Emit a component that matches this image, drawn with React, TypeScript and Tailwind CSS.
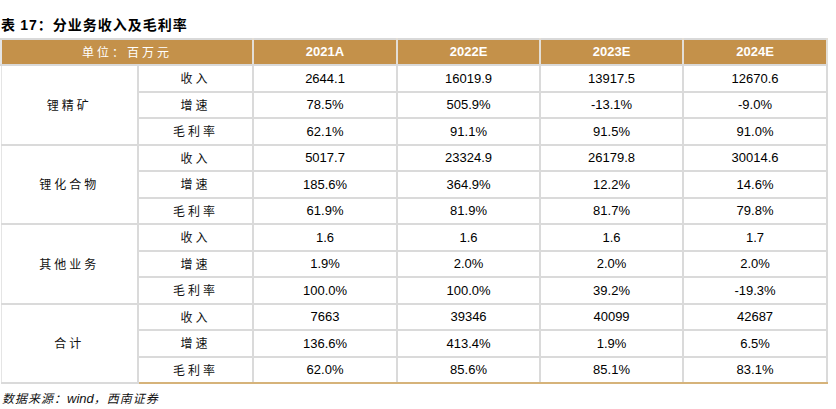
import React from "react";

type Group = {
  name: string;
  rows: { label: string; values: string[] }[];
};

const groups: Group[] = [
  {
    name: "锂精矿",
    rows: [
      { label: "收入", values: ["2644.1", "16019.9", "13917.5", "12670.6"] },
      { label: "增速", values: ["78.5%", "505.9%", "-13.1%", "-9.0%"] },
      { label: "毛利率", values: ["62.1%", "91.1%", "91.5%", "91.0%"] },
    ],
  },
  {
    name: "锂化合物",
    rows: [
      { label: "收入", values: ["5017.7", "23324.9", "26179.8", "30014.6"] },
      { label: "增速", values: ["185.6%", "364.9%", "12.2%", "14.6%"] },
      { label: "毛利率", values: ["61.9%", "81.9%", "81.7%", "79.8%"] },
    ],
  },
  {
    name: "其他业务",
    rows: [
      { label: "收入", values: ["1.6", "1.6", "1.6", "1.7"] },
      { label: "增速", values: ["1.9%", "2.0%", "2.0%", "2.0%"] },
      { label: "毛利率", values: ["100.0%", "100.0%", "39.2%", "-19.3%"] },
    ],
  },
  {
    name: "合计",
    rows: [
      { label: "收入", values: ["7663", "39346", "40099", "42687"] },
      { label: "增速", values: ["136.6%", "413.4%", "1.9%", "6.5%"] },
      { label: "毛利率", values: ["62.0%", "85.6%", "85.1%", "83.1%"] },
    ],
  },
];

const years = ["2021A", "2022E", "2023E", "2024E"];

const cjk = "font-['Noto_Sans_CJK_SC',sans-serif]";
const num = "font-['Liberation_Sans',Arial,sans-serif]";

export default function App() {
  return (
    <div className="w-[836px] h-[409px] bg-white text-black overflow-hidden">
      {/* TITLE */}
      <div
        className={`h-[38px] pt-[15px] pl-[1px] text-[14px] leading-[18px] font-bold tracking-[1px] ${cjk}`}
      >
        表 <span className={num}>17</span>：分业务收入及毛利率
      </div>

      {/* TABLE */}
      <table className="table-fixed border-collapse w-[826px]">
        <colgroup>
          <col className="w-[137px]" />
          <col className="w-[115px]" />
          <col className="w-[144px]" />
          <col className="w-[143px]" />
          <col className="w-[143px]" />
          <col className="w-[144px]" />
        </colgroup>
        <thead>
          <tr className="h-[26px] bg-[#c4914a] text-white">
            <th
              colSpan={2}
              className={`border-2 border-t-[#d9d9d9] border-l-[#e5e5e5] border-r-[#e3ded6] border-b-[#d9d9d9] p-0 text-[12px] font-normal tracking-[3px] ${cjk}`}
            >
              单位：百万元
            </th>
            {years.map((y) => (
              <th
                key={y}
                className={`border-2 border-t-[#d9d9d9] border-x-[#e3ded6] border-b-[#d9d9d9] p-0 text-[13px] font-bold ${num}`}
              >
                {y}
              </th>
            ))}
          </tr>
        </thead>
        <tbody>
          {groups.map((g, gi) =>
            g.rows.map((r, ri) => {
              const last = gi === groups.length - 1 && ri === g.rows.length - 1;
              const bottom = last ? "border-b-[#d6b37a]" : "border-b-[#dadada]";
              return (
                <tr key={g.name + r.label} className="h-[26.5px]">
                  {ri === 0 && (
                    <td
                      rowSpan={3}
                      className={`border-2 border-l-[1px] border-l-[#e5e5e5] border-t-[#dadada] border-r-[#dadada] border-b-[#dadada] p-0 text-center text-[12px] tracking-[3px] text-[#111] ${cjk} ${
                        gi === groups.length - 1 ? "border-b-[#d6b37a]" : ""
                      }`}
                    >
                      {g.name}
                    </td>
                  )}
                  <td
                    className={`border-2 border-[#dadada] ${bottom} p-0 text-center text-[12px] tracking-[3px] text-[#111] ${cjk}`}
                  >
                    {r.label}
                  </td>
                  {r.values.map((v, vi) => (
                    <td
                      key={vi}
                      className={`border-2 border-[#dadada] ${bottom} p-0 text-center text-[13px] ${num}`}
                    >
                      {v}
                    </td>
                  ))}
                </tr>
              );
            })
          )}
        </tbody>
      </table>

      {/* SOURCE */}
      <div className={`pt-[6px] pl-[2px] text-[12px] leading-[16px] italic tracking-[1px] text-[#111] ${cjk}`}>
        数据来源：<span className={`${num} text-[13px] tracking-normal`}>wind</span>，西南证券
      </div>
    </div>
  );
}
